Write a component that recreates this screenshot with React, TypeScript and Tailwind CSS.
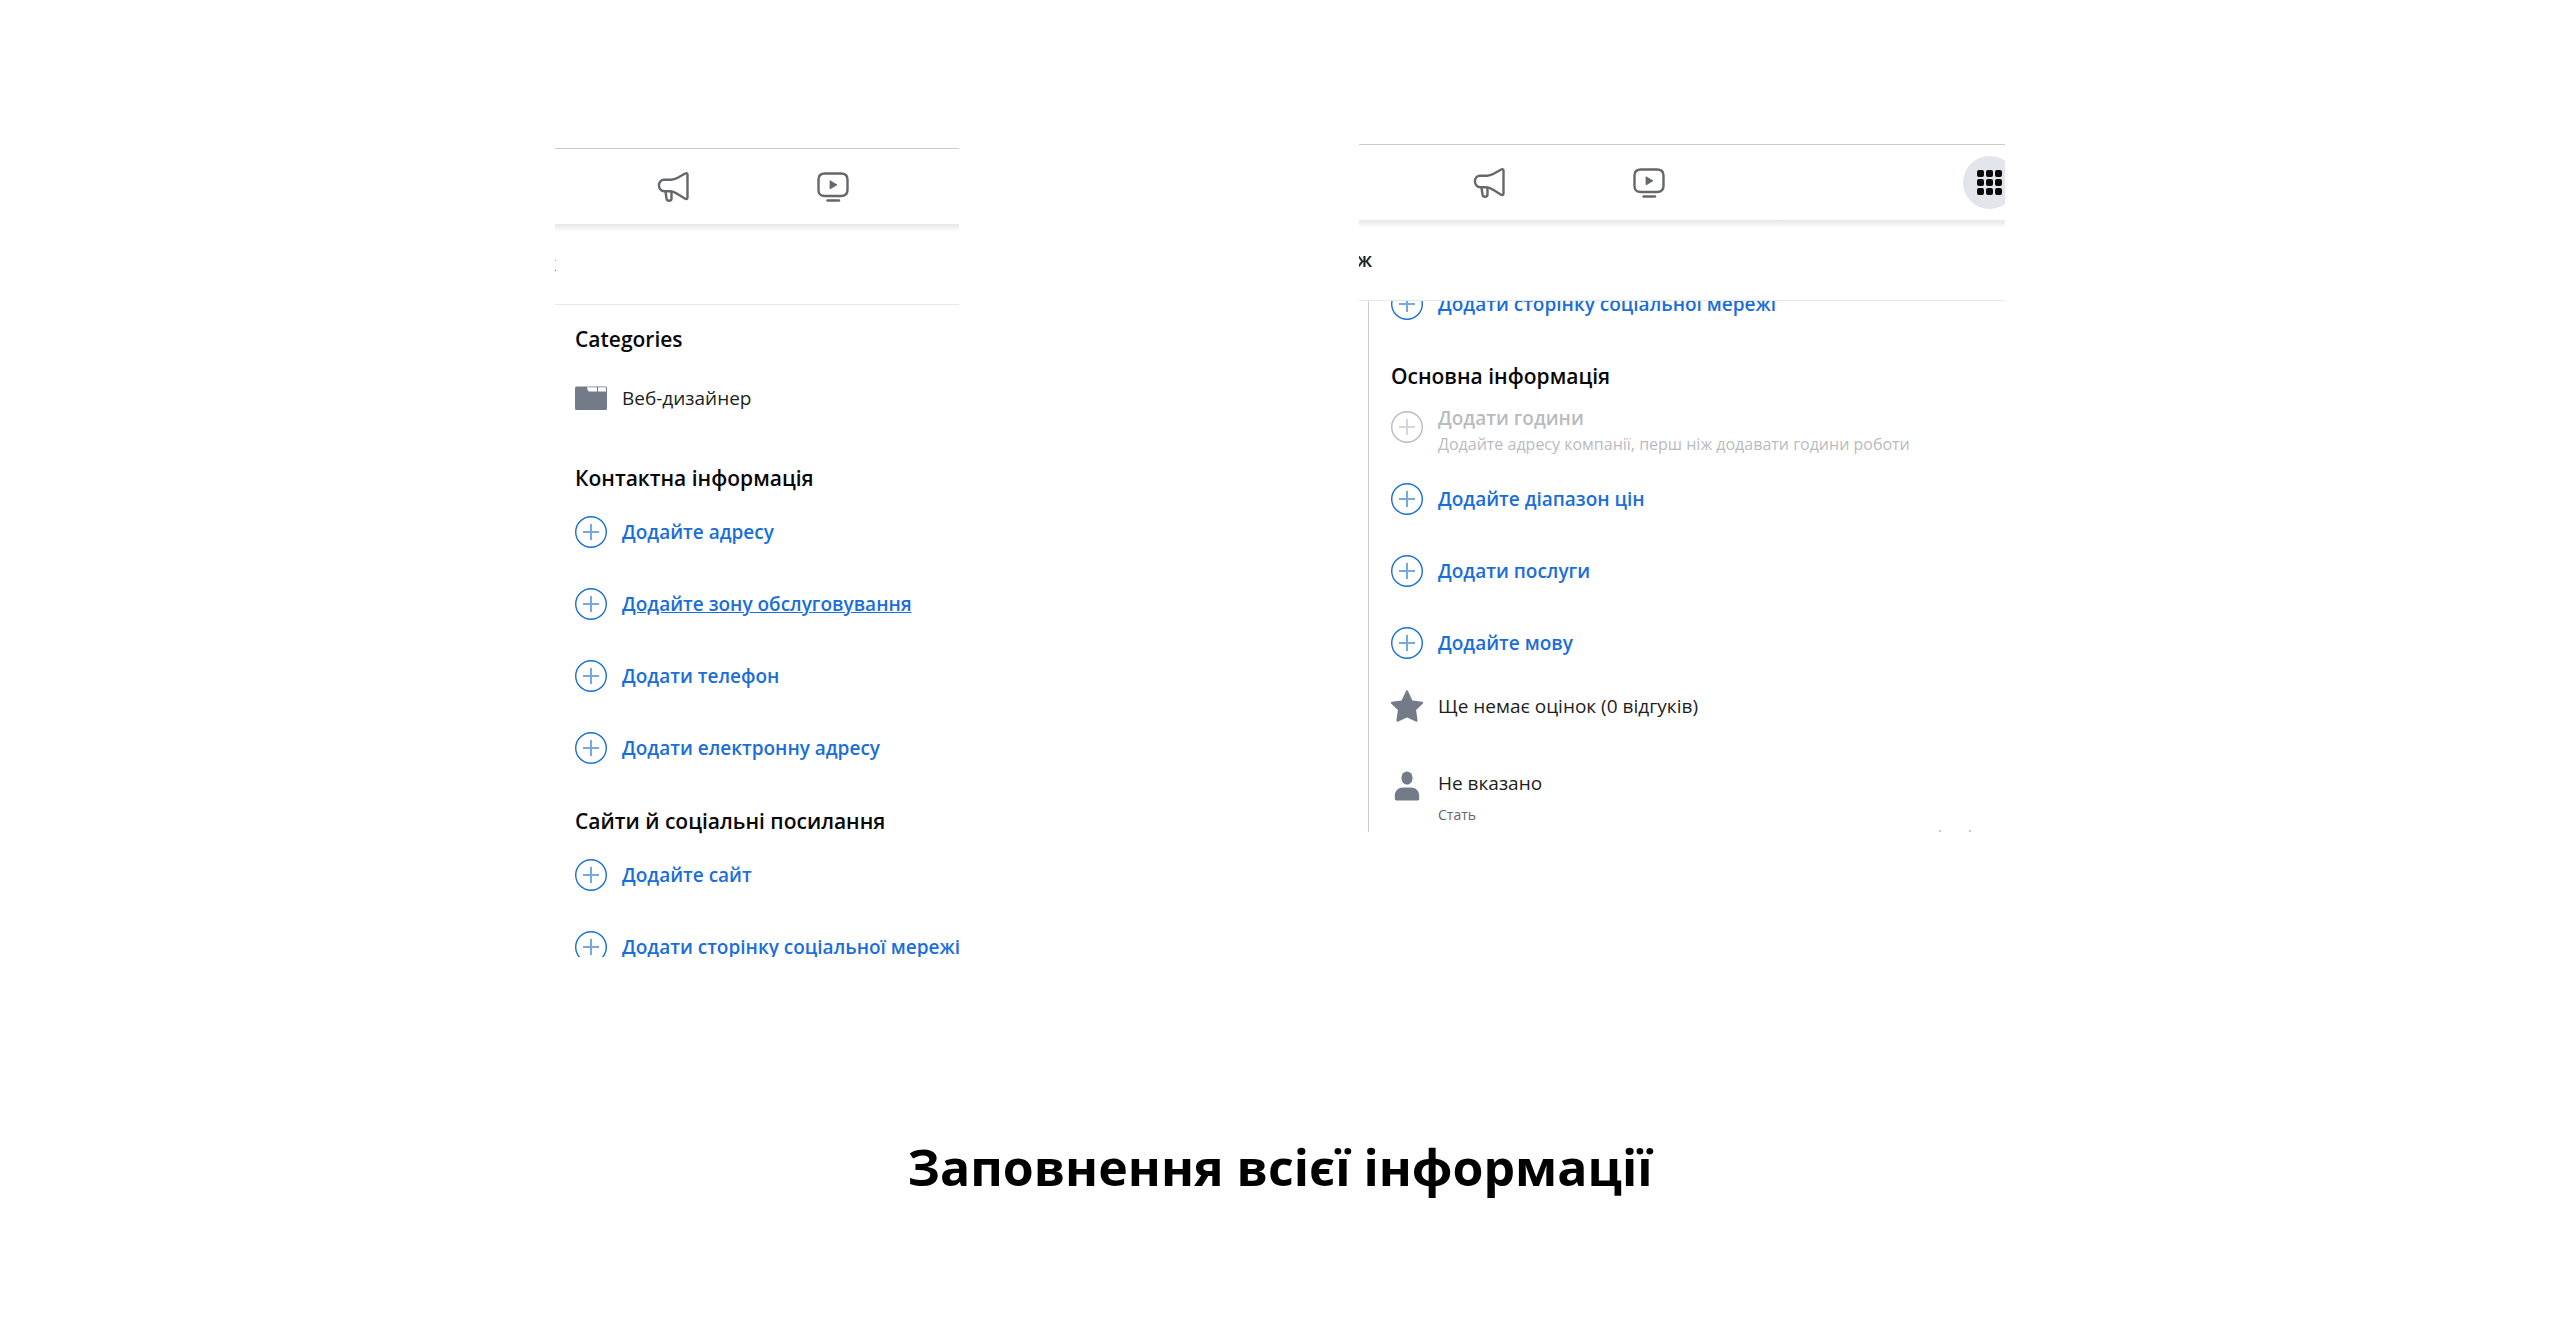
import type { ReactNode } from "react";

function MegaphoneIcon() {
  return (
    <svg viewBox="0 0 32 32" className="size-8" fill="none" stroke="#65676b" strokeWidth="2.400" strokeLinejoin="round" aria-hidden="true">
      <path d="M7 8.700H14c2.500 0 4.500-.7 6.700-1.900l7.500-4.300c1.200-.7 2.300-.2 2.300 1.100v23c0 1.300-1.100 1.800-2.300 1.100L20.500 23c-2.200-1.300-4.500-2.700-7.200-2.700H7.500A5.400 5.400 0 0 1 2 14.800v-.8a5.300 5.300 0 0 1 5-5.300z" />
      <path d="M8.500 20.500l1 7c.5 3 5 3 5 0v-7" />
    </svg>
  );
}

function VideoIcon() {
  return (
    <svg viewBox="0 0 32 32" className="size-8" fill="none" stroke="#65676b" strokeWidth="2.400" aria-hidden="true">
      <path d="M8 2.500h16c4.500 0 6.500 1.600 6.500 6v10.500c0 4.400-2 6-6.500 6H8c-4.500 0-6.500-1.600-6.500-6V8.500c0-4.400 2-6 6.500-6z" />
      <path d="M13 9.700v8.200l7-4.100z" fill="#65676b" stroke="#65676b" strokeWidth="0.800" strokeLinejoin="round" />
      <path d="M10.500 29.500h11.500" strokeLinecap="round" />
    </svg>
  );
}

function PlusIcon() {
  return (
    <svg viewBox="0 0 32 32" className="size-8 shrink-0" fill="none" stroke="currentColor" aria-hidden="true">
      <circle cx="16" cy="16" r="15.300" strokeWidth="1.400" />
      <path d="M16 8v16M8 16h16" strokeWidth="2" opacity="0.6" />
    </svg>
  );
}

function FolderIcon() {
  return (
    <svg viewBox="0 0 32 32" className="size-8 shrink-0" fill="#737b89" aria-hidden="true">
      <path d="M0 6a1.500 1.500 0 0 1 1.500-1.500h29A1.500 1.500 0 0 1 32 6v20.500a1.500 1.500 0 0 1-1.500 1.500h-29A1.500 1.500 0 0 1 0 26.500z" />
      <path d="M12 5.300h9a1 1 0 0 1 1 1V9.500h-7.500c-1.500 0-1.500-1-2-2zM23 9.500V6.300a1 1 0 0 1 1-1H30a1 1 0 0 1 1 1V9.500z" fill="#fff" />
    </svg>
  );
}

function StarIcon() {
  return (
    <svg viewBox="0 0 32 32" className="size-8 shrink-0" fill="#737b89" aria-hidden="true">
      <path d="M14.900 1.200c.5-1.200 1.700-1.200 2.200 0l4.300 9.300 9.800 1.300c1.100.1 1.200 1.200.4 2l-6.500 6.200 1.400 10c.2 1.400-.7 2-1.700 1.500L16 27.500l-8.800 4c-1 .5-1.900-.1-1.700-1.500l1.400-10L.4 13.800c-.8-.8-.7-1.900.4-2l9.800-1.300z" />
    </svg>
  );
}

function PersonIcon() {
  return (
    <svg viewBox="0 0 32 32" className="size-8 shrink-0" fill="#737b89" aria-hidden="true">
      <ellipse cx="16" cy="9" rx="5.600" ry="6.600" />
      <path d="M3.800 29.500v-2.500c0-5.500 3.700-8.500 8.200-8.500h8c4.500 0 8.200 3 8.200 8.500v2.500c0 1.300-.6 2-1.500 2H5.300c-.9 0-1.500-.7-1.500-2z" />
    </svg>
  );
}

function TopBar({ navClass, children }: { navClass: string; children?: ReactNode }) {
  return (
    <header className="flex h-[76px] items-center justify-between overflow-hidden border-t border-[#c9cacd] bg-white">
      <nav className={navClass}>
        <button type="button" aria-label="Реклама" className="flex h-full w-40 items-center justify-center">
          <MegaphoneIcon />
        </button>
        <button type="button" aria-label="Відео" className="flex h-full w-40 items-center justify-center">
          <VideoIcon />
        </button>
      </nav>
      {children}
    </header>
  );
}

function SubBar({ clip }: { clip: string }) {
  return (
    <div className="flex h-[81px] flex-col border-b border-[#e6e7e9] bg-white">
      <div className="h-2 bg-linear-to-b from-[#e6e6e6] to-white" />
      <div className="flex flex-1 items-center pb-2">
        <span className={clip}>ж</span>
      </div>
    </div>
  );
}

function Heading({ children }: { children: ReactNode }) {
  return <h2 className="text-[21px] leading-9 font-semibold text-[#080809]">{children}</h2>;
}

function AddRow({ label, underline = false }: { label: string; underline?: boolean }) {
  return (
    <a href="#" className="flex h-[72px] shrink-0 items-center gap-[15px] whitespace-nowrap text-[#1a6ed8]">
      <PlusIcon />
      <span className={underline ? "text-[19px] font-semibold underline" : "text-[19px] font-semibold"}>{label}</span>
    </a>
  );
}

export default function App() {
  return (
    <main className="min-h-screen bg-white px-6 pt-36 pb-24 font-['Open_Sans','Noto_Sans',sans-serif] text-[#1c1e21]">
      <div className="mx-auto flex max-w-[1450px] items-start justify-between gap-12">
        <section className="mt-1 w-[404px]">
          <TopBar navClass="flex h-full pl-[38px]" />
          <SubBar clip="flex w-px justify-end overflow-hidden text-[19px] font-semibold" />
          <div className="pl-5">
            <div className="pt-4">
              <Heading>Categories</Heading>
            </div>
            <div className="mt-[17px] mb-[38px] flex h-12 items-center gap-[15px] text-[19px]">
              <FolderIcon />
              <span>Веб-дизайнер</span>
            </div>
            <Heading>Контактна інформація</Heading>
            <AddRow label="Додайте адресу" />
            <AddRow label="Додайте зону обслуговування" underline />
            <AddRow label="Додати телефон" />
            <AddRow label="Додати електронну адресу" />
            <div className="pt-[19px]">
              <Heading>Сайти й соціальні посилання</Heading>
            </div>
            <AddRow label="Додайте сайт" />
            <div className="h-[46px] overflow-hidden">
              <AddRow label="Додати сторінку соціальної мережі" />
            </div>
          </div>
        </section>

        <section className="w-[646px]">
          <TopBar navClass="flex h-full pl-[50px]">
            <button type="button" aria-label="Меню" className="-mr-[11px] grid size-[53px] shrink-0 grid-cols-3 place-content-center gap-[2px] rounded-full bg-[#e2e5e9] px-[14px]">
              {Array.from({ length: 9 }, (_, i) => (
                <span key={i} className="size-[7px] rounded-[2px] bg-[#080809]" />
              ))}
            </button>
          </TopBar>
          <SubBar clip="flex w-[13px] justify-end overflow-hidden text-[19px] font-semibold" />
          <div className="relative ml-[9px] border-l border-[#c9ccd1] pl-[22px]">
            <div className="flex h-[39px] items-end overflow-hidden">
              <AddRow label="Додати сторінку соціальної мережі" />
            </div>
            <div className="pt-[18px]">
              <Heading>Основна інформація</Heading>
            </div>
            <div className="flex h-[69px] items-start gap-[15px] pt-[11px] text-[#b9bbc0]">
              <div className="pt-[6px]">
                <PlusIcon />
              </div>
              <div>
                <p className="text-[19px] leading-[26px] font-semibold">Додати години</p>
                <p className="text-base leading-[26px]">Додайте адресу компанії, перш ніж додавати години роботи</p>
              </div>
            </div>
            <AddRow label="Додайте діапазон цін" />
            <AddRow label="Додати послуги" />
            <AddRow label="Додайте мову" />
            <div className="flex h-[54px] items-center gap-[15px] text-[19px]">
              <StarIcon />
              <span>Ще немає оцінок (0 відгуків)</span>
            </div>
            <div className="flex h-[99px] items-start gap-[15px] pt-9">
              <PersonIcon />
              <div>
                <p className="text-[19px] leading-7">Не вказано</p>
                <p className="mt-[6px] text-sm leading-6 text-[#65676b]">Стать</p>
              </div>
            </div>
            <span className="absolute right-[34px] bottom-0 size-[2px] bg-[#c9ccd1]" />
            <span className="absolute right-[64px] bottom-0 size-[2px] bg-[#c9ccd1]" />
          </div>
        </section>
      </div>

      <h1 className="mt-[174px] text-center text-[50px] leading-[72px] font-bold text-black">Заповнення всієї інформації</h1>
    </main>
  );
}
